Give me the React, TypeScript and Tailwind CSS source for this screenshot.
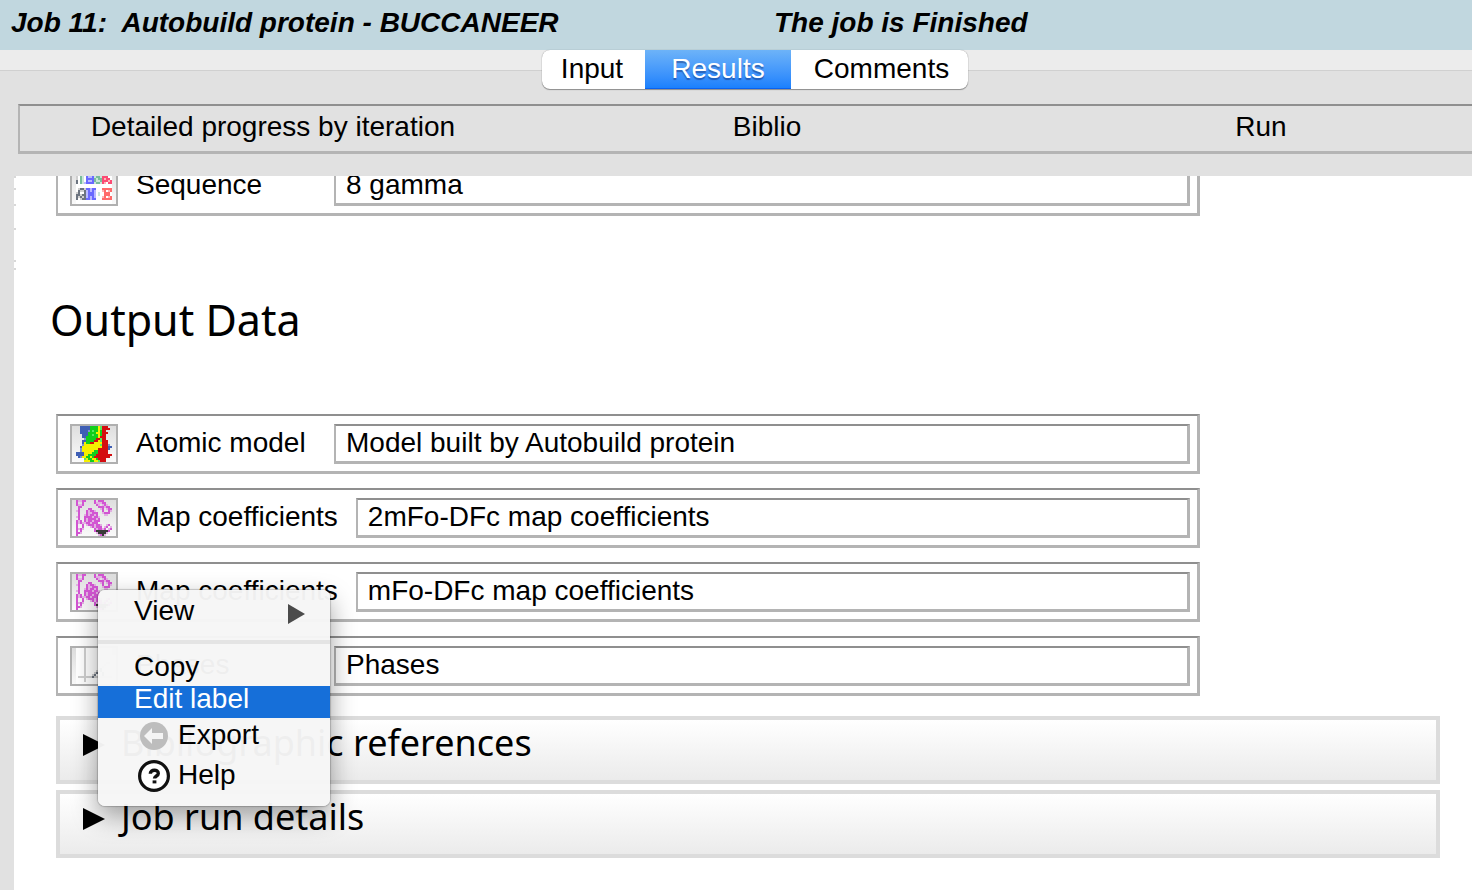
import React, { useId } from "react";

const palette: Record<string, string> = {
  B: "#3f5fb5",
  b: "#7f95cf",
  G: "#12cf1c",
  g: "#58e860",
  Y: "#f5f000",
  R: "#d40d10",
  M: "#d255d2",
  m: "#e2b0e2",
  K: "#3a3a3a",
  W: "#ffffff",
  T: "#79bd9c",
  t: "#cbe6d8",
  N: "#6a6aff",
  n: "#b9b9ff",
  E: "#ff6a6a",
  e: "#ffb5b5",
  P: "#fb4b74",
  D: "#6c7480",
  L: "#cfcfcf",
};

const sprites: Record<string, string[]> = {
  sequence: [
    "WWWWWWWWWWWWWWWWWW",
    "WTTTWNWNWTTTWEEEWW",
    "WWTWWNWNWTWWWEWEWW",
    "WWTWWNWNWTTWWEEEWW",
    "LWTtWNnnNtTTtPPPWW",
    "LWTtWNNNNTtTTPePPW",
    "DWTtWNnnNTttTPPPeP",
    "DWTtnNNNNtTTtPeWPP",
    "WWWWWWWWWWWWWWWWWW",
    "WWWWWWWWWWWWWWWWWW",
    "WLDDLNNnNNWWWEEEEE",
    "WDLLDnNnNnWWWeEWeE",
    "LDWWDnNNNnWtWWEEEW",
    "DDLDDnNNNnWtWWEEEW",
    "DLDLDnNnNnWWWeEWeE",
    "DWLDDNNnNNWWWEEEEE",
    "WWWWWWWWWWWWWWWWWW",
    "WWWWWWWWWWWWWWWWWW",
  ],
  model: [
    "..BBBBBGGGGYgRRR..",
    "..BBBBBGGGGYgRRRR.",
    "..BBBBbGgGGYGRR...",
    "..BBBBGGGGYYGRRR..",
    "...BBBGGgGGYGRR...",
    "...BBGGGGGGYRRR...",
    "....bGGGGGRRgRR...",
    "...BBGGGGRRYgRRR..",
    "...BYGGRRYYYYRRR..",
    "...bYYYYYYYYgRRRb.",
    "..BYYYYYYYYYYRRRBB",
    "..bYYYYYYYYRRRRRB.",
    "..bYYYYYYGGRRRRR..",
    "BBBBYYYYGGGRRRRR..",
    "BBBBYYGGGGRRRRRRRR",
    ".BbYYGGYGRRRRRRRR.",
    "....gYGGYYGRRRR...",
    "....YYYGGYYgRRR...",
  ],
  map: [
    "MmmMM....M.MMM....",
    "M..M.....MmmmMM...",
    "MmmM......Mm.mMm..",
    ".MM........MMMmMM.",
    ".M....MM....mM.mMM",
    "mM...MmMMm...M..Mm",
    ".M...MmmMMM..mMMM.",
    ".M..mMmMMmM...mm..",
    "mM..MMMMmMMm......",
    ".M..MmMMMMmM......",
    "MmM.MmMMmMMM......",
    "MmMmmMMmMMM.......",
    "M..M.mMMMmMMm..mM.",
    "M..M...mMmMMM.mM.m",
    "MmMm.....MmMMmM.mM",
    "M.M......MKKKKKKM.",
    "MMm.......mKKKKm..",
    "M..........mMKm...",
  ],
  phases: [
    "WWWWLWWWWWWWWWWWWW",
    "WWWWLWWWWWWWWWWWWW",
    "WWWWLWWWWWWWWWWWWW",
    "WWWWLWWWWWWWWWWWWW",
    "WWWWLWWWWWWWWWWWWW",
    "WWWWLWWWWWWWWWWWWW",
    "WWWWLWWWWWWWWWWWWW",
    "WWWWLWWWWWWWWWWLLW",
    "WWWWLWWWWWWWWWLWWW",
    "WWWWLWWWWWWWWLWWWW",
    "WWWWLWWWWWWLDWWWWW",
    "WWWWLWWWWWLWDWWWWW",
    "WWWWLWWWWLDWWDWWWW",
    "WWWWLWWWLDWWWDWWWW",
    "WLLLLLLLDLLLLLLLLL",
    "WWWWLWWWWWWWWWWWWW",
    "WWWWLWWWWWWWWWWWWW",
    "WWWWWWWWWWWWWWWWWW",
  ],
};

function Sprite({ name }: { name: string }) {
  return (
    <svg viewBox="0 0 18 18" className="size-9" shapeRendering="crispEdges" aria-hidden="true">
      {sprites[name].flatMap((row, y) =>
        [...row].map((c, x) =>
          palette[c] ? <rect key={`${x}-${y}`} x={x} y={y} width="1" height="1" fill={palette[c]} /> : null
        )
      )}
    </svg>
  );
}

function DataRow({ icon, label, value, children }: {
  icon: string;
  label: string;
  value: string;
  children?: React.ReactNode;
}) {
  const id = useId();
  return (
    <div className="relative flex w-full max-w-[1144px] items-start border-t-2 border-r-[3px] border-b-[3px] border-l-2 border-[#b4b4b4] border-t-[#8f8f8f] pt-2 pr-[7px] pb-[7px] pl-3">
      <button
        type="button"
        aria-label={`${label} menu`}
        className="flex h-10 w-12 shrink-0 items-center justify-center border-2 border-[#b0b0b0] bg-linear-to-b from-[#dedede] to-[#fafafa]"
      >
        <Sprite name={icon} />
      </button>
      <label htmlFor={id} className="ml-[18px] min-w-[180px] shrink-0 leading-[38px] whitespace-nowrap">
        {label}
      </label>
      <input
        id={id}
        defaultValue={value}
        readOnly
        className="ml-[18px] h-10 min-w-0 flex-1 border-t-2 border-r-[3px] border-b-[3px] border-l-2 border-[#b4b4b4] border-t-[#8f8f8f] bg-white pb-[2px] pl-[10px] outline-none"
      />
      {children}
    </div>
  );
}

function Fold({ title }: { title: string }) {
  return (
    <button
      type="button"
      className="flex h-[68px] w-full items-start border-4 border-[#dcdcdc] bg-linear-to-b from-white to-[#ebebeb] pl-[23px] text-left font-['Noto_Sans',sans-serif] text-[36px] leading-[46px]"
    >
      <svg viewBox="0 0 22 22" className="mt-[14px] size-[22px] shrink-0" aria-hidden="true">
        <path d="M0 0 22 11 0 22z" fill="#000" />
      </svg>
      <span className="ml-4">{title}</span>
    </button>
  );
}

function ContextMenu() {
  return (
    <div
      role="menu"
      className="absolute top-[26px] left-10 z-10 w-[232px] rounded-[7px] bg-[#f6f6f6]/97 py-2 leading-[26px] shadow-[0_0_1px_1px_rgba(0,0,0,0.18),0_10px_26px_rgba(0,0,0,0.38)]"
    >
      <button type="button" role="menuitem" className="flex h-8 w-full items-start justify-between pr-[25px] pl-9">
        View
        <svg viewBox="0 0 17 20" className="mt-[6px] h-5 w-[17px]" aria-hidden="true">
          <path d="M0 0 17 10 0 20z" fill="#4b4b4b" />
        </svg>
      </button>
      <hr className="my-[10px] border-0 border-t-4 border-[#e4e4e4]" />
      <button type="button" role="menuitem" className="flex h-8 w-full items-start pl-9">
        Copy
      </button>
      <button type="button" role="menuitem" className="flex h-8 w-full items-start bg-[#166fd9] pl-9 text-white">
        Edit label
      </button>
      <button type="button" role="menuitem" className="flex h-10 w-full items-start pt-1 pl-10">
        <svg viewBox="0 0 32 32" className="size-8" aria-hidden="true">
          <circle cx="16" cy="14" r="14" fill="#bdbdbd" />
          <path d="M6 14 14 6v5h11v6H14v5z" fill="#f4f4f4" />
        </svg>
        <span className="ml-2">Export</span>
      </button>
      <button type="button" role="menuitem" className="flex h-10 w-full items-start pt-1 pl-10">
        <svg viewBox="0 0 32 32" className="size-8 overflow-visible" aria-hidden="true">
          <circle cx="16" cy="14" r="14.4" fill="#fff" stroke="#111" strokeWidth="3.2" />
          <path d="M12.3 11.7c0-4.6 8-4.6 8-.3 0 2.6-3.8 2.6-3.8 5.2" fill="none" stroke="#111" strokeWidth="3.4" />
          <path d="M14.6 18.4h3.8v3h-3.8z" fill="#111" />
        </svg>
        <span className="ml-2">Help</span>
      </button>
    </div>
  );
}

export default function App() {
  return (
    <div className="min-h-screen overflow-hidden bg-[#e1e1e1] font-['Liberation_Sans',Arial,sans-serif] text-[28px] text-black">
      <header className="flex h-[50px] items-start bg-[#c1d7df] pl-[11px] leading-[46px] font-bold whitespace-pre italic">
        <h1 className="w-[763px]">{"Job 11:  Autobuild protein - BUCCANEER"}</h1>
        <p>The job is Finished</p>
      </header>

      <div className="flex justify-center bg-[linear-gradient(#ececec_20px,#d0d0d0_20px,#d0d0d0_21px,#e1e1e1_21px)] pl-[38px]">
        <div role="tablist" className="flex h-[39px] rounded-lg bg-white leading-9 shadow-[0_1px_1px_rgba(0,0,0,0.35),0_0_1px_rgba(0,0,0,0.4)]">
          <button type="button" role="tab" className="w-[103px] pr-[3px] pb-px">Input</button>
          <button
            type="button"
            role="tab"
            aria-selected="true"
            className="w-[146px] border-b border-[#0a62f0] bg-linear-to-b from-[#6db3f8] to-[#1a80fd] text-white text-shadow-[0_2px_1px_rgba(0,0,60,0.35)]"
          >
            Results
          </button>
          <button type="button" role="tab" className="w-[177px] pb-px pl-1">Comments</button>
        </div>
      </div>

      <nav className="mt-[15px] -mr-[42px] ml-[18px] grid h-[50px] grid-cols-3 border-t-2 border-b-[3px] border-l-2 border-[#b4b4b4] border-t-[#8f8f8f] px-[6px] leading-[41px]">
        <button type="button" className="flex justify-center">Detailed progress by iteration</button>
        <button type="button" className="flex justify-center">Biblio</button>
        <button type="button" className="flex justify-center">Run</button>
      </nav>

      <main className="relative mt-[22px] ml-[14px] min-h-[714px] overflow-hidden bg-white pr-8 pb-8 pl-[42px]">
        <svg viewBox="0 0 2 96" className="absolute top-0 left-0 h-24 w-[2px]" aria-hidden="true">
          <path d="M0 1h2M0 13h2M0 29h2M0 53h2M0 85h2M0 93h2" stroke="#d8d8d8" strokeWidth="2" />
        </svg>
        <div className="-mt-5">
          <DataRow icon="sequence" label="Sequence" value="8 gamma" />
        </div>
        <h2 className="-ml-[6px] pt-20 pb-[71px] font-['Noto_Sans',sans-serif] text-[43px] leading-[47px]">Output Data</h2>
        <div className="flex flex-col gap-[14px]">
          <DataRow icon="model" label="Atomic model" value="Model built by Autobuild protein" />
          <DataRow icon="map" label="Map coefficients" value="2mFo-DFc map coefficients" />
          <DataRow icon="map" label="Map coefficients" value="mFo-DFc map coefficients">
            <ContextMenu />
          </DataRow>
          <DataRow icon="phases" label="Phases" value="Phases" />
        </div>
        <div className="mt-5 flex flex-col gap-[6px]">
          <Fold title="Bibliographic references" />
          <Fold title="Job run details" />
        </div>
      </main>
    </div>
  );
}
